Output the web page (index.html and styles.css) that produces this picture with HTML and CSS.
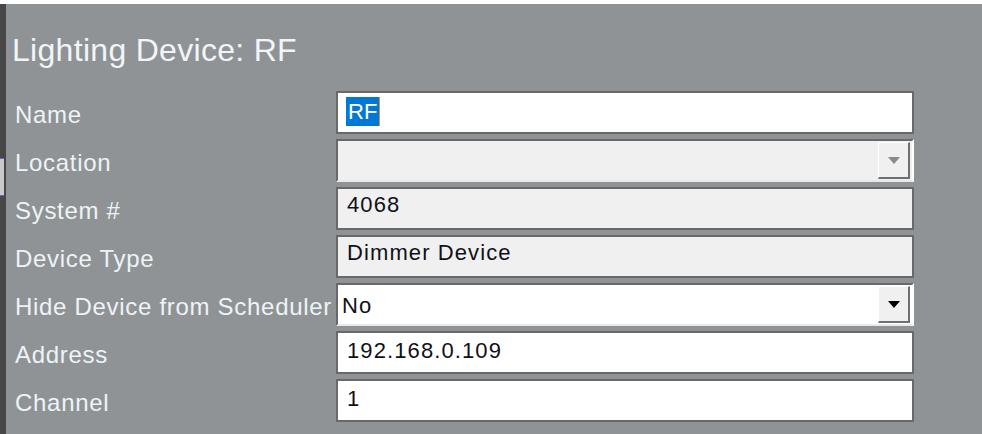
FILE: index.html
```html
<!DOCTYPE html>
<html lang="en">
<head>
    <meta charset="UTF-8">
    <meta name="viewport" content="width=device-width, initial-scale=1.0">
    <title>Lighting Device: RF</title>
    <link rel="stylesheet" href="styles.css">
</head>
<body>
    <div class="topline"></div>
    <div class="window">
        <!-- left edge of the parent window -->
        <div class="sidebar">
            <span class="sidebar-tab"></span>
        </div>

        <div class="panel">
            <h1 class="panel-title">Lighting Device: RF</h1>

            <div class="form-grid">
                <div class="label">Name</div>
                <div class="field"><span class="selected">RF</span><span class="caret"></span></div>

                <div class="label">Location</div>
                <div class="combo combo-disabled">
                    <span class="combo-value"></span>
                    <span class="combo-btn"><span class="arrow"></span></span>
                </div>

                <div class="label">System #</div>
                <div class="field field-readonly">4068</div>

                <div class="label">Device Type</div>
                <div class="field field-readonly">Dimmer Device</div>

                <div class="label">Hide Device from Scheduler</div>
                <div class="combo">
                    <span class="combo-value">No</span>
                    <span class="combo-btn"><span class="arrow"></span></span>
                </div>

                <div class="label">Address</div>
                <div class="field">192.168.0.109</div>

                <div class="label">Channel</div>
                <div class="field">1</div>
            </div>
        </div>
    </div>
</body>
</html>
```

FILE: styles.css
```css
body {
    margin: 0;
    background-color: #8f9396;
    font-family: 'Liberation Sans', Arial, sans-serif;
    overflow: hidden;
}

.topline {
    height: 4px;
    background: #ffffff;
}

.window {
    display: flex;
    height: 430px;
}

.sidebar {
    position: relative;
    width: 6px;
    background: #474747;
}

.sidebar-tab {
    position: absolute;
    left: 0;
    top: 154px;
    width: 4px;
    height: 36px;
    background: #c9c9c9;
    border-top: 1px solid #6c5ce0;
    border-bottom: 1px solid #6c5ce0;
}

.panel {
    flex: 1;
    padding-top: 28px;
}

.panel-title {
    margin: 0 0 23px 6px;
    font-size: 32px;
    line-height: 36px;
    font-weight: normal;
    letter-spacing: 0.3px;
    color: #f2f5f7;
}

.form-grid {
    display: grid;
    grid-template-columns: 321px 578px;
    grid-auto-rows: 43px;
    row-gap: 5px;
    padding-left: 9px;
}

.label {
    padding-top: 10px;
    font-size: 24px;
    letter-spacing: 0.7px;
    color: #eef3f6;
    white-space: nowrap;
}

.field {
    box-sizing: border-box;
    border: 2px solid #696969;
    background: #ffffff;
    padding: 4px 0 0 9px;
    font-size: 22px;
    line-height: 28px;
    letter-spacing: 1.1px;
    color: #101018;
}

.field-readonly {
    background: #f0f0f0;
    padding-top: 2px;
}

.selected {
    display: inline-block;
    margin-left: -1px;
    padding: 0 2px;
    background: #0078d7;
    color: #ffffff;
    line-height: 29px;
    letter-spacing: 0;
}

.caret {
    display: inline-block;
    width: 1px;
    height: 29px;
    background: #e08a3c;
    vertical-align: top;
}

.combo {
    box-sizing: border-box;
    display: flex;
    align-items: stretch;
    border-top: 2px solid #696969;
    border-left: 2px solid #696969;
    border-right: 2px solid #ffffff;
    border-bottom: 2px solid #e9e9e9;
    background: #ffffff;
    padding: 1px 2px 1px 0;
}

.combo-disabled {
    background: #f0f0f0;
}

.combo-value {
    flex: 1;
    padding: 6px 0 0 4px;
    font-size: 22px;
    line-height: 28px;
    letter-spacing: 1.1px;
    color: #101018;
}

.combo-btn {
    box-sizing: border-box;
    width: 32px;
    display: flex;
    align-items: center;
    justify-content: center;
    background: #f0f0f0;
    border-top: 1px solid #ffffff;
    border-left: 1px solid #ffffff;
    border-right: 2px solid #6f6f6f;
    border-bottom: 2px solid #6f6f6f;
}

.arrow {
    width: 0;
    height: 0;
    border-left: 6px solid transparent;
    border-right: 6px solid transparent;
    border-top: 7px solid #000000;
}

.combo-disabled .arrow {
    border-top-color: #8a8a8a;
}
```
